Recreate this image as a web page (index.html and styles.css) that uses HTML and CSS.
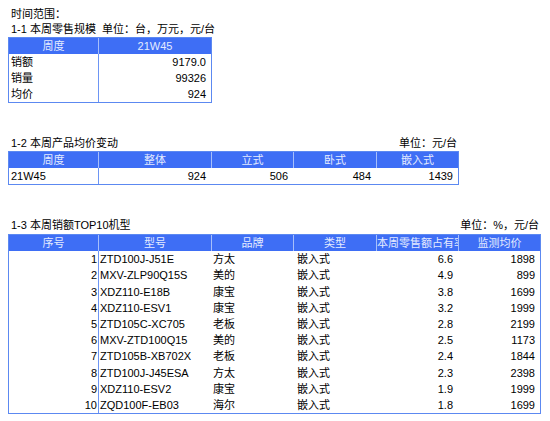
FILE: index.html
```html
<!DOCTYPE html>
<html lang="zh">
<head>
<meta charset="utf-8">
<link rel="stylesheet" href="styles.css">
</head>
<body>
<div class="page">
  <div class="line first">时间范围：</div>
  <div class="line title1">1-1 本周零售规模&nbsp;&nbsp;单位：台，万元，元/台</div>
  <div class="grid t1">
    <div class="c h">周度</div><div class="c h last">21W45</div>
    <div class="c l frz">销额</div><div class="c r last">9179.0</div>
    <div class="c l frz">销量</div><div class="c r last">99326</div>
    <div class="c l frz">均价</div><div class="c r last">924</div>
  </div>

  <div class="titlebar w2"><span>1-2 本周产品均价变动</span><span class="unit">单位：元/台</span></div>
  <div class="grid t2">
    <div class="c h">周度</div><div class="c h">整体</div><div class="c h">立式</div><div class="c h">卧式</div><div class="c h last">嵌入式</div>
    <div class="c l frz">21W45</div><div class="c r">924</div><div class="c r">506</div><div class="c r">484</div><div class="c r last">1439</div>
  </div>

  <div class="titlebar w3"><span>1-3 本周销额TOP10机型</span><span class="unit u3">单位：%，元/台</span></div>
  <div class="grid t3">
    <div class="c h">序号</div><div class="c h">型号</div><div class="c h">品牌</div><div class="c h">类型</div><div class="c h over">本周零售额占有率</div><div class="c h last">监测均价</div>

    <div class="c rn frz">1</div><div class="c m">ZTD100J-J51E</div><div class="c m">方太</div><div class="c t">嵌入式</div><div class="c r">6.6</div><div class="c r last">1898</div>
    <div class="c rn frz">2</div><div class="c m">MXV-ZLP90Q15S</div><div class="c m">美的</div><div class="c t">嵌入式</div><div class="c r">4.9</div><div class="c r last">899</div>
    <div class="c rn frz">3</div><div class="c m">XDZ110-E18B</div><div class="c m">康宝</div><div class="c t">嵌入式</div><div class="c r">3.8</div><div class="c r last">1699</div>
    <div class="c rn frz">4</div><div class="c m">XDZ110-ESV1</div><div class="c m">康宝</div><div class="c t">嵌入式</div><div class="c r">3.2</div><div class="c r last">1999</div>
    <div class="c rn frz">5</div><div class="c m">ZTD105C-XC705</div><div class="c m">老板</div><div class="c t">嵌入式</div><div class="c r">2.8</div><div class="c r last">2199</div>
    <div class="c rn frz">6</div><div class="c m">MXV-ZTD100Q15</div><div class="c m">美的</div><div class="c t">嵌入式</div><div class="c r">2.5</div><div class="c r last">1173</div>
    <div class="c rn frz">7</div><div class="c m">ZTD105B-XB702X</div><div class="c m">老板</div><div class="c t">嵌入式</div><div class="c r">2.4</div><div class="c r last">1844</div>
    <div class="c rn frz">8</div><div class="c m">ZTD100J-J45ESA</div><div class="c m">方太</div><div class="c t">嵌入式</div><div class="c r">2.3</div><div class="c r last">2398</div>
    <div class="c rn frz">9</div><div class="c m">XDZ110-ESV2</div><div class="c m">康宝</div><div class="c t">嵌入式</div><div class="c r">1.9</div><div class="c r last">1999</div>
    <div class="c rn frz">10</div><div class="c m">ZQD100F-EB03</div><div class="c m">海尔</div><div class="c t">嵌入式</div><div class="c r">1.8</div><div class="c r last">1699</div>
  </div>
</div>
</body>
</html>
```

FILE: styles.css
```css
html, body {
  margin: 0;
  padding: 0;
  background: #ffffff;
}

.page {
  padding: 6px 0 0 8px;
  font-family: "Liberation Sans", "Noto Sans CJK SC", sans-serif;
  font-size: 11px;
  color: #000;
}

.line {
  padding-left: 3px;
  white-space: nowrap;
}

.first {
  height: 16px;
  line-height: 16px;
}

.title1 {
  height: 15px;
  line-height: 15px;
}

.titlebar {
  display: flex;
  justify-content: space-between;
  margin-top: 32px;
  padding-left: 3px;
  height: 16px;
  line-height: 16px;
  white-space: nowrap;
  box-sizing: border-box;
}

.w2 { width: 451px; }
.w3 { width: 533px; height: 17px; line-height: 17px; }
.unit { padding-right: 2px; }

.grid {
  display: grid;
  border: 1px solid #5c89f1;
  width: max-content;
}

.t1 { grid-template-columns: 90px 112px; }
.t2 { grid-template-columns: 90px 113px 82px 83px 81px; }
.t3 { grid-template-columns: 90px 113px 82px 83px 82px 81px; }

.c {
  height: 16px;
  line-height: 17px;
  white-space: nowrap;
  overflow: hidden;
  box-sizing: border-box;
  border-right: 1px solid transparent;
}

.t3 .c { height: 16.2px; }

.c.last { border-right: 0; }

.h {
  background: #3e6ef5;
  color: #e4ebff;
  text-align: center;
  border-right-color: #a7bffa;
  line-height: 16px;
}

.over { text-align: left; }

.frz { border-right-color: #6d95f4; }

.l { padding-left: 2px; }
.r { text-align: right; padding-right: 5px; }
.rn { text-align: right; padding-right: 1px; }
.m { padding-left: 1px; }
.t { padding-left: 3px; }
```
